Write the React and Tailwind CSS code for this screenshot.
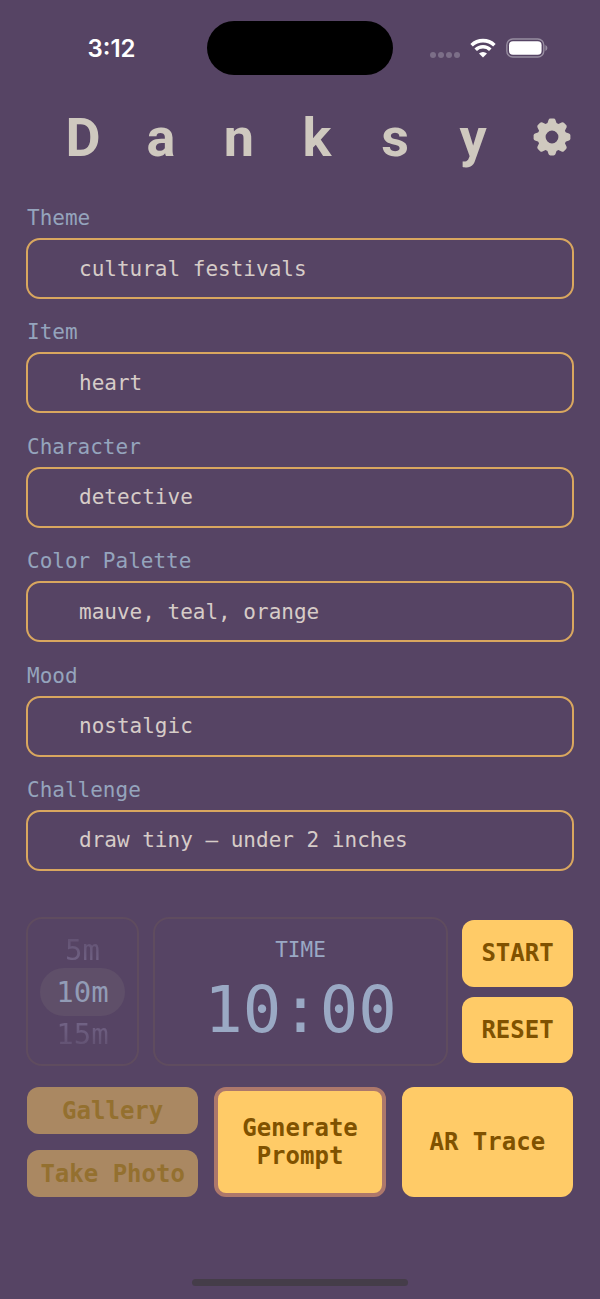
import React, { useEffect, useState } from 'react';

const TITLE = ['D', 'a', 'n', 'k', 's', 'y'];

const PROMPT = [
  { id: 'theme', label: 'Theme', value: 'cultural festivals' },
  { id: 'item', label: 'Item', value: 'heart' },
  { id: 'character', label: 'Character', value: 'detective' },
  { id: 'palette', label: 'Color Palette', value: 'mauve, teal, orange' },
  { id: 'mood', label: 'Mood', value: 'nostalgic' },
  { id: 'challenge', label: 'Challenge', value: 'draw tiny – under 2 inches' },
];

const TEETH = [0, 45, 90, 135, 180, 225, 270, 315];

const GearIcon = () => (
  <svg viewBox="0 0 38 38" className="w-[38px] h-[38px]" aria-hidden="true">
    <circle cx="19" cy="19" r="10.4" fill="none" stroke="currentColor" strokeWidth="8" />
    {TEETH.map((angle) => (
      <path
        key={angle}
        transform={`rotate(${angle} 19 19)`}
        d="M13.8 7 L15.5 2 Q16 0.6 17.4 0.6 H20.6 Q22 0.6 22.5 2 L24.2 7 Z"
        fill="currentColor"
      />
    ))}
  </svg>
);

const WifiIcon = () => (
  <svg viewBox="0 0 26 20" className="w-[26px] h-5" aria-hidden="true">
    <g fill="none" stroke="white" strokeWidth="3.6">
      <path d="M1.6 7.2 A16.5 16.5 0 0 1 24.4 7.2" />
      <path d="M5.7 11.8 A10.4 10.4 0 0 1 20.3 11.8" />
    </g>
    <path d="M13 19.6 L9 15.5 A5.8 5.8 0 0 1 17 15.5 Z" fill="white" />
  </svg>
);

const BatteryIcon = () => (
  <svg viewBox="0 0 42 20" className="w-[42px] h-5" aria-hidden="true">
    <rect x="0.8" y="1" width="37" height="18" rx="6" fill="none" stroke="#978da0" strokeWidth="1.4" />
    <rect x="3" y="3.2" width="32.6" height="13.6" rx="4" fill="white" />
    <path d="M39.4 7 Q41.4 8 41.4 10 Q41.4 12 39.4 13 Z" fill="#978da0" />
  </svg>
);

const StatusBar = () => (
  <div className="grid grid-cols-[1fr_186px_1fr] items-center pt-[21px] font-['Inter',sans-serif]">
    <span className="pl-4 pt-0.5 text-center text-2xl font-semibold text-white">3:12</span>
    <div className="h-[54px] rounded-full bg-black" />
    <div className="flex items-center justify-center gap-2.5 pr-4">
      <div className="flex gap-0.5 pt-3.5">
        {[0, 1, 2, 3].map((dot) => (
          <span key={dot} className="w-1.5 h-1.5 rounded-full bg-[#7c6f88]" />
        ))}
      </div>
      <WifiIcon />
      <BatteryIcon />
    </div>
  </div>
);

const Field = ({ id, label, value, onChange }) => (
  <div className="flex flex-col">
    <label htmlFor={id} className="text-[21px] leading-7 text-[#95a4bd] pl-px pb-1.5">
      {label}
    </label>
    <input
      id={id}
      type="text"
      value={value}
      onChange={(e) => onChange(id, e.target.value)}
      className="w-full h-[61px] pl-[51px] pr-4 rounded-[14px] border-2 border-[#d9a75f] bg-transparent text-[21px] text-[#d6ccc8] outline-none"
    />
  </div>
);

const formatTime = (seconds) => {
  const m = String(Math.floor(seconds / 60)).padStart(2, '0');
  const s = String(seconds % 60).padStart(2, '0');
  return `${m}:${s}`;
};

const App = () => {
  const [fields, setFields] = useState(PROMPT);
  const [minutes, setMinutes] = useState(10);
  const [seconds, setSeconds] = useState(600);
  const [running, setRunning] = useState(false);

  useEffect(() => {
    if (!running) return;
    const timer = setInterval(() => setSeconds((s) => Math.max(0, s - 1)), 1000);
    return () => clearInterval(timer);
  }, [running]);

  const handleChange = (id, value) => {
    setFields(fields.map((f) => (f.id === id ? { ...f, value } : f)));
  };

  const pickMinutes = (value) => {
    setMinutes(value);
    setSeconds(value * 60);
    setRunning(false);
  };

  return (
    <div className="min-h-screen flex flex-col bg-[#564464] font-['DejaVu_Sans_Mono',monospace]">
      <StatusBar />

      {/* --- TITLE --- */}
      <header className="flex items-center justify-between pl-11 pr-[29px] pt-[29px]">
        <h1 className="flex-1 grid grid-cols-6 max-w-[468px] pt-0.5 text-center font-['Roboto',sans-serif] text-[54px] leading-[64px] font-bold text-[#cfc9bf]">
          {TITLE.map((letter) => (
            <span key={letter}>{letter}</span>
          ))}
        </h1>
        <button type="button" aria-label="Settings" className="text-[#cfc9bf]">
          <GearIcon />
        </button>
      </header>

      <main className="flex-1 flex flex-col px-[26px] pt-[34px]">
        {/* --- PROMPT --- */}
        <div className="flex-1 flex flex-col justify-between gap-4">
          {fields.map((f) => (
            <Field key={f.id} {...f} onChange={handleChange} />
          ))}
        </div>

        {/* --- TIMER --- */}
        <section className="grid grid-cols-[113px_1fr_111px] gap-3.5 pr-px pt-[46px]">
          <div className="flex flex-col items-center justify-center rounded-2xl border-2 border-[#5f4c5f] h-[149px]">
            <button
              type="button"
              onClick={() => pickMinutes(5)}
              className="h-9 text-[29px] leading-9 bg-linear-to-b from-[#5f4e6e] to-[#75678a] bg-clip-text text-transparent"
            >
              5m
            </button>
            <button
              type="button"
              onClick={() => pickMinutes(10)}
              className="w-[85px] h-12 rounded-full bg-[#5f4f69] text-[29px] leading-[48px] text-[#929cb6]"
            >
              10m
            </button>
            <button
              type="button"
              onClick={() => pickMinutes(15)}
              className="h-9 text-[29px] leading-9 bg-linear-to-b from-[#75678a] to-[#5f4e6e] bg-clip-text text-transparent"
            >
              15m
            </button>
          </div>

          <div className="flex flex-col items-center justify-center pt-1 rounded-2xl border-2 border-[#5f4c5f] text-[#9aa9c4]">
            <p className="text-[21px] leading-7">TIME</p>
            <p className="pt-1 text-[64px] leading-[84px]">{formatTime(seconds)}</p>
          </div>

          <div className="flex flex-col gap-2.5 py-[3px] text-2xl font-bold text-[#805200]">
            <button type="button" onClick={() => setRunning(true)} className="flex-1 rounded-xl bg-[#ffcb67]">
              START
            </button>
            <button type="button" onClick={() => pickMinutes(minutes)} className="flex-1 rounded-xl bg-[#ffcb67]">
              RESET
            </button>
          </div>
        </section>

        {/* --- ACTIONS --- */}
        <section className="grid grid-cols-3 gap-4 px-px pt-[21px] h-[131px] text-2xl leading-7 font-bold text-[#805200]">
          <div className="flex flex-col gap-4">
            <button type="button" disabled className="flex-1 rounded-xl bg-[#aa8862] text-[#94702f]">
              Gallery
            </button>
            <button type="button" disabled className="flex-1 rounded-xl bg-[#aa8862] text-[#94702f]">
              Take Photo
            </button>
          </div>
          <button type="button" className="rounded-xl border-4 border-[#ad786b] bg-[#ffcb67]">
            Generate Prompt
          </button>
          <button type="button" className="rounded-xl bg-[#ffcb67]">
            AR Trace
          </button>
        </section>
      </main>

      <footer className="flex justify-center pt-[82px] pb-[13px]">
        <div className="w-9/25 h-[7px] rounded-full bg-[#453d49]" />
      </footer>
    </div>
  );
};

export default App;
